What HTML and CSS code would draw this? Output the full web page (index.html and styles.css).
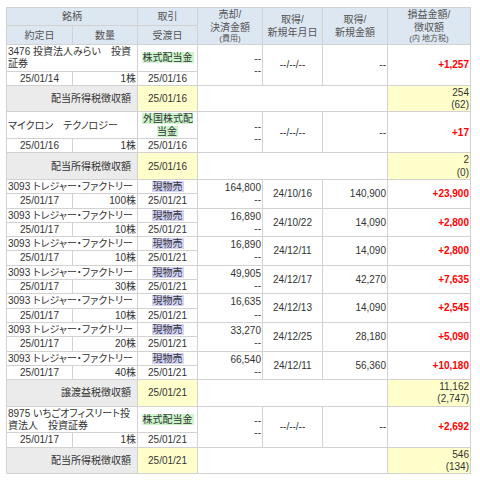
FILE: index.html
```html
<!DOCTYPE html>
<html lang="ja">
<head>
    <meta charset="UTF-8">
    <meta name="viewport" content="width=device-width, initial-scale=1.0">
    <title>約定履歴</title>
    <link rel="stylesheet" href="styles.css">
</head>
<body>
    <table class="trades">
        <colgroup>
            <col class="w-date"><col class="w-qty"><col class="w-kind"><col class="w-sell"><col class="w-get"><col class="w-cost"><col class="w-pl">
        </colgroup>
        <thead>
            <tr class="head-top">
                <th colspan="2">銘柄</th>
                <th>取引</th>
                <th rowspan="2">売却/<br>決済金額<span class="note">(費用)</span></th>
                <th rowspan="2">取得/<br>新規年月日</th>
                <th rowspan="2">取得/<br>新規金額</th>
                <th rowspan="2">損益金額/<br>徴収額<span class="note">(内 地方税)</span></th>
            </tr>
            <tr class="head-bottom">
                <th>約定日</th>
                <th>数量</th>
                <th>受渡日</th>
            </tr>
        </thead>
        <tbody>
            <!-- 3476 -->
            <tr>
                <td colspan="2" class="name">3476 投資法人みらい　投資証券</td>
                <td class="c"><span class="tag div">株式配当金</span></td>
                <td rowspan="2" class="r">--<br>--</td>
                <td rowspan="2" class="c">--/--/--</td>
                <td rowspan="2" class="r">--</td>
                <td rowspan="2" class="r gain">+1,257</td>
            </tr>
            <tr>
                <td class="c">25/01/14</td>
                <td class="r">1株</td>
                <td class="c">25/01/16</td>
            </tr>
            <tr class="tax">
                <td colspan="2" class="lbl">配当所得税徴収額</td>
                <td class="c yel">25/01/16</td>
                <td colspan="3"></td>
                <td class="r yel">254<br>(62)</td>
            </tr>

            <!-- マイクロン -->
            <tr>
                <td colspan="2" class="name">マイクロン　テクノロジー</td>
                <td class="c"><span class="tag div">外国株式配当金</span></td>
                <td rowspan="2" class="r">--<br>--</td>
                <td rowspan="2" class="c">--/--/--</td>
                <td rowspan="2" class="r">--</td>
                <td rowspan="2" class="r gain">+17</td>
            </tr>
            <tr>
                <td class="c">25/01/16</td>
                <td class="r">1株</td>
                <td class="c">25/01/16</td>
            </tr>
            <tr class="tax">
                <td colspan="2" class="lbl">配当所得税徴収額</td>
                <td class="c yel">25/01/16</td>
                <td colspan="3"></td>
                <td class="r yel">2<br>(0)</td>
            </tr>

            <!-- 3093 -->
            <tr>
                <td colspan="2" class="name">3093 トレジャー・ファクトリー</td>
                <td class="c"><span class="tag sell">現物売</span></td>
                <td rowspan="2" class="r">164,800<br>--</td>
                <td rowspan="2" class="c">24/10/16</td>
                <td rowspan="2" class="r">140,900</td>
                <td rowspan="2" class="r gain">+23,900</td>
            </tr>
            <tr>
                <td class="c">25/01/17</td>
                <td class="r">100株</td>
                <td class="c">25/01/21</td>
            </tr>
            <tr>
                <td colspan="2" class="name">3093 トレジャー・ファクトリー</td>
                <td class="c"><span class="tag sell">現物売</span></td>
                <td rowspan="2" class="r">16,890<br>--</td>
                <td rowspan="2" class="c">24/10/22</td>
                <td rowspan="2" class="r">14,090</td>
                <td rowspan="2" class="r gain">+2,800</td>
            </tr>
            <tr>
                <td class="c">25/01/17</td>
                <td class="r">10株</td>
                <td class="c">25/01/21</td>
            </tr>
            <tr>
                <td colspan="2" class="name">3093 トレジャー・ファクトリー</td>
                <td class="c"><span class="tag sell">現物売</span></td>
                <td rowspan="2" class="r">16,890<br>--</td>
                <td rowspan="2" class="c">24/12/11</td>
                <td rowspan="2" class="r">14,090</td>
                <td rowspan="2" class="r gain">+2,800</td>
            </tr>
            <tr>
                <td class="c">25/01/17</td>
                <td class="r">10株</td>
                <td class="c">25/01/21</td>
            </tr>
            <tr>
                <td colspan="2" class="name">3093 トレジャー・ファクトリー</td>
                <td class="c"><span class="tag sell">現物売</span></td>
                <td rowspan="2" class="r">49,905<br>--</td>
                <td rowspan="2" class="c">24/12/17</td>
                <td rowspan="2" class="r">42,270</td>
                <td rowspan="2" class="r gain">+7,635</td>
            </tr>
            <tr>
                <td class="c">25/01/17</td>
                <td class="r">30株</td>
                <td class="c">25/01/21</td>
            </tr>
            <tr>
                <td colspan="2" class="name">3093 トレジャー・ファクトリー</td>
                <td class="c"><span class="tag sell">現物売</span></td>
                <td rowspan="2" class="r">16,635<br>--</td>
                <td rowspan="2" class="c">24/12/13</td>
                <td rowspan="2" class="r">14,090</td>
                <td rowspan="2" class="r gain">+2,545</td>
            </tr>
            <tr>
                <td class="c">25/01/17</td>
                <td class="r">10株</td>
                <td class="c">25/01/21</td>
            </tr>
            <tr>
                <td colspan="2" class="name">3093 トレジャー・ファクトリー</td>
                <td class="c"><span class="tag sell">現物売</span></td>
                <td rowspan="2" class="r">33,270<br>--</td>
                <td rowspan="2" class="c">24/12/25</td>
                <td rowspan="2" class="r">28,180</td>
                <td rowspan="2" class="r gain">+5,090</td>
            </tr>
            <tr>
                <td class="c">25/01/17</td>
                <td class="r">20株</td>
                <td class="c">25/01/21</td>
            </tr>
            <tr>
                <td colspan="2" class="name">3093 トレジャー・ファクトリー</td>
                <td class="c"><span class="tag sell">現物売</span></td>
                <td rowspan="2" class="r">66,540<br>--</td>
                <td rowspan="2" class="c">24/12/11</td>
                <td rowspan="2" class="r">56,360</td>
                <td rowspan="2" class="r gain">+10,180</td>
            </tr>
            <tr>
                <td class="c">25/01/17</td>
                <td class="r">40株</td>
                <td class="c">25/01/21</td>
            </tr>
            <tr class="tax">
                <td colspan="2" class="lbl">譲渡益税徴収額</td>
                <td class="c yel">25/01/21</td>
                <td colspan="3"></td>
                <td class="r yel">11,162<br>(2,747)</td>
            </tr>

            <!-- 8975 -->
            <tr>
                <td colspan="2" class="name">8975 いちごオフィスリート投資法人　投資証券</td>
                <td class="c"><span class="tag div">株式配当金</span></td>
                <td rowspan="2" class="r">--<br>--</td>
                <td rowspan="2" class="c">--/--/--</td>
                <td rowspan="2" class="r">--</td>
                <td rowspan="2" class="r gain">+2,692</td>
            </tr>
            <tr>
                <td class="c">25/01/17</td>
                <td class="r">1株</td>
                <td class="c">25/01/21</td>
            </tr>
            <tr class="tax">
                <td colspan="2" class="lbl">配当所得税徴収額</td>
                <td class="c yel">25/01/21</td>
                <td colspan="3"></td>
                <td class="r yel">546<br>(134)</td>
            </tr>
        </tbody>
    </table>
</body>
</html>
```

FILE: styles.css
```css
body {
    margin: 0;
    background: #fff;
    color: #333;
    font-family: "Liberation Sans", "Noto Sans CJK JP", sans-serif;
    font-size: 10px;
}
.trades {
    margin: 7px 0 0 6px;
    width: 464px;
    border-collapse: collapse;
    table-layout: fixed;
}
.w-date { width: 66px; }
.w-qty { width: 65px; }
.w-kind { width: 60px; }
.w-sell { width: 65px; }
.w-get { width: 60px; }
.w-cost { width: 65px; }
.w-pl { width: 83px; }

.trades th,
.trades td {
    border: 1px solid #d2d2d2;
    padding: 1px 1px 0;
    line-height: 12.3px;
    vertical-align: middle;
    overflow: hidden;
}
.trades th {
    background: #dde7f2;
    color: #555;
    font-weight: normal;
    text-align: center;
    padding: 0;
    line-height: 13px;
}
.head-top th { height: 17px; }
.head-bottom th { height: 18px; }
.note {
    display: block;
    font-size: 8px;
    line-height: 10px;
}

.name {
    text-align: left;
    font-feature-settings: "palt";
}
.c { text-align: center; }
.r { text-align: right; }
.gain {
    color: #ff0000;
    font-weight: bold;
}
.tag {
    padding: 0 1px;
}
.tag.div { background: #ccf7cc; }
.tag.sell { background: #d4d4fa; }

.lbl {
    background: #ebebeb;
    text-align: right;
    padding-right: 6px !important;
}
.yel { background: #ffffcc; }
```
